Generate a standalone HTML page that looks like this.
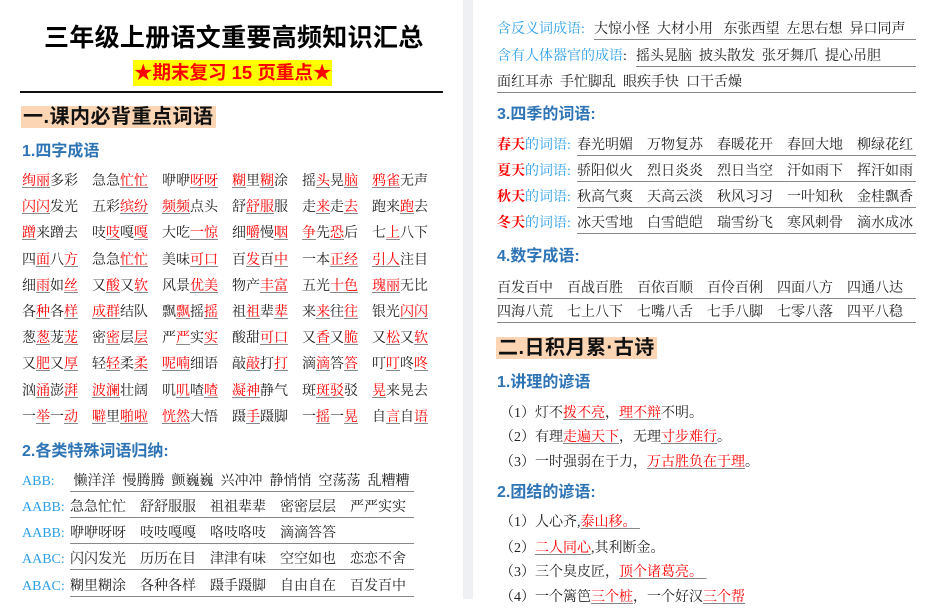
<!DOCTYPE html>
<html><head><meta charset="utf-8"><style>
*{margin:0;padding:0;box-sizing:border-box}
body{width:934px;height:599px;overflow:hidden;background:#fff;position:relative;font-family:"Liberation Serif","Noto Serif CJK SC",serif;font-size:14px;color:#222}
.a{position:absolute;white-space:nowrap;line-height:20px}
.gap{position:absolute;left:463px;top:0;width:10px;height:599px;background:#eef0f4}
.h1{font-family:"Liberation Sans","Noto Sans CJK SC",sans-serif;font-weight:bold;font-size:25px;line-height:30px;color:#000;letter-spacing:0.3px}
.sub{background:#ffff00;color:#ff0000;font-family:"Liberation Sans","Noto Sans CJK SC",sans-serif;font-weight:bold;font-size:18.5px;line-height:26px;padding:0 1px}
.sec{background:#fcd5b4;font-family:"Liberation Sans","Noto Sans CJK SC",sans-serif;font-weight:bold;font-size:20px;line-height:22px;color:#111;padding:0 2px;letter-spacing:0.5px}
.h2{font-family:"Liberation Sans","Noto Sans CJK SC",sans-serif;font-weight:bold;font-size:16px;color:#2e74b5}
.r{color:#ff0000;text-decoration:underline;text-decoration-color:#888;text-underline-offset:2px}
.cell{position:absolute;width:70px;line-height:20px;white-space:nowrap}
.lb{color:#2ea0e8}
.ul{position:absolute;border-bottom:1.5px solid #888;line-height:19px;white-space:nowrap}
</style></head><body>
<div class="gap"></div>
<div class="a h1" style="left:44px;top:23px">三年级上册语文重要高频知识汇总</div>
<div class="a sub" style="left:133px;top:60px">★期末复习 15 页重点★</div>
<div style="position:absolute;left:20px;top:91px;width:423px;height:1.5px;background:#111"></div>
<div class="a sec" style="left:21px;top:106px">一.课内必背重点词语</div>
<div class="a h2" style="left:22px;top:142px">1.四字成语</div>

<div id="grid"></div>
<script>
var rows=[
"[绚丽]多彩|急急[忙忙]|咿咿[呀呀]|[糊]里[糊]涂|摇[头]晃[脑]|[鸦雀]无声",
"[闪闪]发光|五彩[缤纷]|[频频]点头|舒[舒服]服|走[来]走[去]|跑来[跑]去",
"[蹭]来蹭去|吱[吱]嘎[嘎]|大吃[一惊]|细[嚼]慢[咽]|[争]先[恐]后|七[上]八下",
"四[面]八[方]|急急[忙忙]|美味[可口]|百[发]百[中]|一本[正经]|[引人]注目",
"细[雨]如[丝]|又[酸]又[软]|风景[优美]|物产[丰富]|五光[十色]|[瑰丽]无比",
"各[种]各[样]|[成群]结队|飘[飘]摇[摇]|祖[祖]辈[辈]|来[来]往[往]|银光[闪闪]",
"葱[葱]茏[茏]|密[密]层[层]|严[严]实[实]|酸甜[可口]|又[香]又[脆]|又[松]又[软]",
"又[肥]又[厚]|轻[轻]柔[柔]|[呢喃]细语|敲[敲]打[打]|滴[滴]答[答]|叮[叮]咚[咚]",
"汹[涌]澎[湃]|[波澜]壮阔|叽[叽]喳[喳]|[凝神]静气|斑[斑驳]驳|[晃]来晃去",
"一[举]一[动]|[噼]里[啪啦]|[恍然]大悟|蹑[手]蹑脚|一[摇]一[晃]|自[言]自[语]"];
var h="";
rows.forEach(function(r,i){r.split("|").forEach(function(w,j){
var t=w.replace(/\[/g,'<span class="r">').replace(/\]/g,'</span>');
h+='<div class="cell" style="left:'+(22+j*70)+'px;top:'+(172+i*26.2)+'px">'+t+'</div>';});});
document.getElementById("grid").innerHTML=h;
</script>

<div class="a h2" style="left:22px;top:442px">2.各类特殊词语归纳:</div>
<div class="a lb" style="left:22px;top:472px">ABB:</div>
<div class="ul" style="left:70px;top:472px;width:344px">&nbsp;懒洋洋&nbsp; 慢腾腾&nbsp; 颤巍巍&nbsp; 兴冲冲&nbsp; 静悄悄&nbsp; 空荡荡&nbsp; 乱糟糟</div>
<div class="a lb" style="left:22px;top:498px">AABB:</div>
<div class="ul" style="left:70px;top:498px;width:344px">急急忙忙&nbsp;&nbsp;&nbsp; 舒舒服服&nbsp;&nbsp;&nbsp; 祖祖辈辈&nbsp;&nbsp;&nbsp; 密密层层&nbsp;&nbsp;&nbsp; 严严实实</div>
<div class="a lb" style="left:22px;top:524px">AABB:</div>
<div class="ul" style="left:70px;top:524px;width:344px">咿咿呀呀&nbsp;&nbsp;&nbsp; 吱吱嘎嘎&nbsp;&nbsp;&nbsp; 咯吱咯吱&nbsp;&nbsp;&nbsp; 滴滴答答</div>
<div class="a lb" style="left:22px;top:550px">AABC:</div>
<div class="ul" style="left:70px;top:550px;width:344px">闪闪发光&nbsp;&nbsp;&nbsp; 历历在目&nbsp;&nbsp;&nbsp; 津津有味&nbsp;&nbsp;&nbsp; 空空如也&nbsp;&nbsp;&nbsp; 恋恋不舍</div>
<div class="a lb" style="left:22px;top:577px">ABAC:</div>
<div class="ul" style="left:70px;top:577px;width:344px">糊里糊涂&nbsp;&nbsp;&nbsp; 各种各样&nbsp;&nbsp;&nbsp; 蹑手蹑脚&nbsp;&nbsp;&nbsp; 自由自在&nbsp;&nbsp;&nbsp; 百发百中</div>

<!-- right page -->
<div class="a lb" style="left:497px;top:20px">含反义词成语:</div>
<div class="ul" style="left:594px;top:20px;width:322px">大惊小怪&nbsp; 大材小用&nbsp;&nbsp; 东张西望&nbsp; 左思右想&nbsp; 异口同声</div>
<div class="a lb" style="left:497px;top:47px">含有人体器官的成语<span style="color:#222">:</span></div>
<div class="ul" style="left:636px;top:47px;width:280px">摇头晃脑&nbsp; 披头散发&nbsp; 张牙舞爪&nbsp; 提心吊胆</div>
<div class="ul" style="left:497px;top:73px;width:419px">面红耳赤&nbsp; 手忙脚乱&nbsp; 眼疾手快&nbsp; 口干舌燥</div>

<div class="a h2" style="left:497px;top:105px">3.四季的词语:</div>
<div class="a lb" style="left:497px;top:136px"><b style="color:#f00">春天</b>的词语:</div>
<div class="ul" style="left:577px;top:136px;width:339px">春光明媚&nbsp;&nbsp;&nbsp; 万物复苏&nbsp;&nbsp;&nbsp; 春暖花开&nbsp;&nbsp;&nbsp; 春回大地&nbsp;&nbsp;&nbsp; 柳绿花红</div>
<div class="a lb" style="left:497px;top:162px"><b style="color:#f00">夏天</b>的词语:</div>
<div class="ul" style="left:577px;top:162px;width:339px">骄阳似火&nbsp;&nbsp;&nbsp; 烈日炎炎&nbsp;&nbsp;&nbsp; 烈日当空&nbsp;&nbsp;&nbsp; 汗如雨下&nbsp;&nbsp;&nbsp; 挥汗如雨</div>
<div class="a lb" style="left:497px;top:188px"><b style="color:#f00">秋天</b>的词语:</div>
<div class="ul" style="left:577px;top:188px;width:339px">秋高气爽&nbsp;&nbsp;&nbsp; 天高云淡&nbsp;&nbsp;&nbsp; 秋风习习&nbsp;&nbsp;&nbsp; 一叶知秋&nbsp;&nbsp;&nbsp; 金桂飘香</div>
<div class="a lb" style="left:497px;top:214px"><b style="color:#f00">冬天</b>的词语:</div>
<div class="ul" style="left:577px;top:214px;width:339px">冰天雪地&nbsp;&nbsp;&nbsp; 白雪皑皑&nbsp;&nbsp;&nbsp; 瑞雪纷飞&nbsp;&nbsp;&nbsp; 寒风刺骨&nbsp;&nbsp;&nbsp; 滴水成冰</div>

<div class="a h2" style="left:497px;top:247px">4.数字成语:</div>
<div class="ul" style="left:497px;top:279px;width:419px">百发百中&nbsp;&nbsp;&nbsp; 百战百胜&nbsp;&nbsp;&nbsp; 百依百顺&nbsp;&nbsp;&nbsp; 百伶百俐&nbsp;&nbsp;&nbsp; 四面八方&nbsp;&nbsp;&nbsp; 四通八达</div>
<div class="ul" style="left:497px;top:303px;width:419px">四海八荒&nbsp;&nbsp;&nbsp; 七上八下&nbsp;&nbsp;&nbsp; 七嘴八舌&nbsp;&nbsp;&nbsp; 七手八脚&nbsp;&nbsp;&nbsp; 七零八落&nbsp;&nbsp;&nbsp; 四平八稳</div>

<div class="a sec" style="left:496px;top:337px">二.日积月累·古诗</div>
<div class="a h2" style="left:497px;top:373px">1.讲理的谚语</div>
<div class="a" style="left:500px;top:404px">（1）灯不<span class="r">拨不亮</span>，<span class="r">理不辩</span>不明。</div>
<div class="a" style="left:500px;top:428px">（2）有理<span class="r">走遍天下</span>，无理<span class="r">寸步难行</span>。</div>
<div class="a" style="left:500px;top:453px">（3）一时强弱在于力，<span class="r">万古胜负在于理</span>。</div>
<div class="a h2" style="left:497px;top:483px">2.团结的谚语:</div>
<div class="a" style="left:500px;top:513px">（1）人心齐,<span class="r">泰山移。&nbsp;</span></div>
<div class="a" style="left:500px;top:539px">（2）<span class="r">二人同心</span>,其利断金。</div>
<div class="a" style="left:500px;top:563px">（3）三个臭皮匠，<span class="r">顶个诸葛亮。&nbsp;</span></div>
<div class="a" style="left:500px;top:588px">（4）一个篱笆<span class="r">三个桩</span>，一个好汉<span class="r">三个帮</span></div>
</body></html>
